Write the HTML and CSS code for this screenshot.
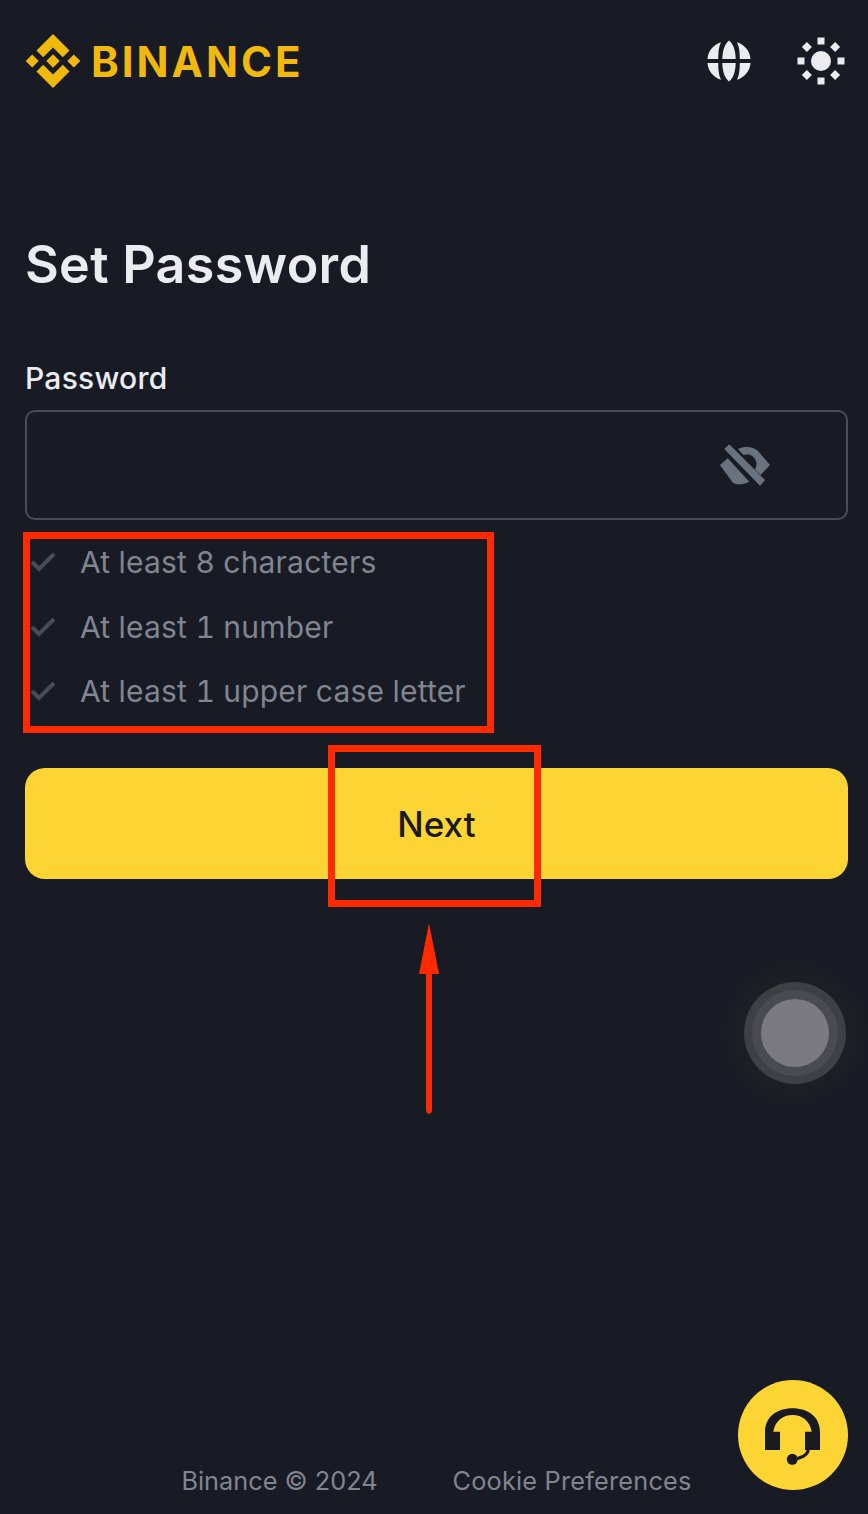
FILE: index.html
```html
<!DOCTYPE html>
<html lang="en">
<head>
<meta charset="UTF-8">
<meta name="viewport" content="width=device-width, initial-scale=1.0">
<title>Set Password</title>
<link rel="stylesheet" href="styles.css">
</head>
<body>

<div class="page">
    <header class="topbar">
        <div class="logo">
            <svg class="logo-mark" viewBox="0 0 56 56" width="56" height="56">
                <path fill="#f0b90b" d="M28 1 L44.500 17.500 L37.800 24.200 L28 14.400 L18.200 24.200 L11.500 17.500 Z"/>
                <path fill="#f0b90b" d="M28 55 L44.500 38.500 L37.800 31.800 L28 41.600 L18.200 31.800 L11.500 38.500 Z"/>
                <path fill="#f0b90b" d="M7.200 21.500 L13.700 28 L7.200 34.500 L0.700 28 Z"/>
                <path fill="#f0b90b" d="M48.800 21.500 L55.300 28 L48.800 34.500 L42.300 28 Z"/>
                <path fill="#f0b90b" d="M28 21.300 L34.700 28 L28 34.700 L21.300 28 Z"/>
            </svg>
            <span class="logo-text">BINANCE</span>
        </div>
        <div class="topbar-icons">
            <svg class="icon-globe" viewBox="0 0 44 44" width="44" height="44">
                <path fill="#eaecef" d="M22 1.500 C17.500 5 15.500 12 15.300 20 L28.700 20 C28.500 12 26.500 5 22 1.500 Z"/>
                <path fill="#eaecef" d="M22 42.500 C17.500 39 15.500 32 15.300 24 L28.700 24 C28.500 32 26.500 39 22 42.500 Z"/>
                <path fill="#eaecef" d="M14 3.200 C11.500 8 11.300 14 11.200 20 L0.500 20 C1 12 6.500 5.500 14 3.200 Z"/>
                <path fill="#eaecef" d="M30 3.200 C32.500 8 32.700 14 32.800 20 L43.500 20 C43 12 37.500 5.500 30 3.200 Z"/>
                <path fill="#eaecef" d="M14 40.800 C11.500 36 11.300 30 11.200 24 L0.500 24 C1 32 6.500 38.500 14 40.800 Z"/>
                <path fill="#eaecef" d="M30 40.800 C32.500 36 32.700 30 32.800 24 L43.500 24 C43 32 37.500 38.500 30 40.800 Z"/>
            </svg>
            <svg class="icon-sun" viewBox="0 0 48 48" width="48" height="48">
                <circle cx="24" cy="24" r="10" fill="#eaecef"/>
                <rect x="20.500" y="0.500" width="7" height="7" fill="#eaecef"/>
                <rect x="20.500" y="40.500" width="7" height="7" fill="#eaecef"/>
                <rect x="0.500" y="20.500" width="7" height="7" fill="#eaecef"/>
                <rect x="40.500" y="20.500" width="7" height="7" fill="#eaecef"/>
                <path fill="#eaecef" d="M9.900 4.900 L14.900 9.900 L9.900 14.900 L4.900 9.900 Z"/>
                <path fill="#eaecef" d="M38.100 4.900 L43.100 9.900 L38.100 14.900 L33.100 9.900 Z"/>
                <path fill="#eaecef" d="M9.900 33.100 L14.900 38.100 L9.900 43.100 L4.900 38.100 Z"/>
                <path fill="#eaecef" d="M38.100 33.100 L43.100 38.100 L38.100 43.100 L33.100 38.100 Z"/>
            </svg>
        </div>
    </header>

    <main class="content">
        <h1 class="title">Set Password</h1>
        <label class="field-label">Password</label>
        <div class="field">
            <svg class="icon-eye" viewBox="0 0 50 44" width="50" height="44">
                <path fill="#6a7280" d="M9.300 1.300 L4.300 6 L40 42.700 L45 37 Z"/>
                <path fill="#6a7280" d="M18 6 C25 3 33 3.500 38 8 L50 22 L40.700 32 L35 26.500 C38 21 36 16 33 13.500 C30 11 27 11 23.500 12 Z"/>
                <path fill="#6a7280" d="M0 22 L7.700 15.300 L29.300 38.700 C22 42 17 42 13 40 Z"/>
            </svg>
        </div>
        <ul class="rules">
            <li class="rule">
                <svg class="check" viewBox="0 0 26 20" width="26" height="20"><path d="M2 10 L9 17 L24 2" fill="none" stroke="#474d57" stroke-width="4"/></svg>
                <span>At least 8 characters</span>
            </li>
            <li class="rule">
                <svg class="check" viewBox="0 0 26 20" width="26" height="20"><path d="M2 10 L9 17 L24 2" fill="none" stroke="#474d57" stroke-width="4"/></svg>
                <span>At least 1 number</span>
            </li>
            <li class="rule">
                <svg class="check" viewBox="0 0 26 20" width="26" height="20"><path d="M2 10 L9 17 L24 2" fill="none" stroke="#474d57" stroke-width="4"/></svg>
                <span>At least 1 upper case letter</span>
            </li>
        </ul>
        <button class="button">Next</button>
    </main>

    <footer class="footer">
        <span>Binance © 2024</span>
        <span class="footer-link">Cookie Preferences</span>
    </footer>
</div>

<!-- annotations drawn over the screenshot -->
<div class="mark mark-rules"></div>
<div class="mark mark-next"></div>
<svg class="arrow" viewBox="0 0 24 194" width="24" height="194">
    <path fill="#ff2a00" d="M12 1 L22 52 L15 52 L15 188 C15 193 9 193 9 188 L9 52 L2 52 Z"/>
</svg>

<div class="touch-button">
    <div class="touch-ring">
        <div class="touch-core"></div>
    </div>
</div>

<div class="support">
    <svg viewBox="0 0 60 60" width="60" height="60">
        <path fill="#181a20" d="M2 45 L2 27 C2 12 14 3.300 29.500 3.300 C45 3.300 57 12 57 27 L57 45 L42 45 L42 26.700 L48.700 26.700 C47 16 39 10 29.500 10 C20 10 12 16 10.300 26.700 L17 26.700 L17 45 Z"/>
        <path fill="none" stroke="#181a20" stroke-width="3" d="M45.500 45 C44 50 38 54 29.500 54"/>
        <circle cx="29.300" cy="54.300" r="5.500" fill="#181a20"/>
    </svg>
</div>

</body>
</html>
```

FILE: styles.css
```css
* {
    box-sizing: border-box;
}

body {
    margin: 0;
    background-color: #191b24;
    color: #eaecef;
    font-family: "Inter", "Noto Sans", sans-serif;
}

.page {
    height: 1514px;
    display: flex;
    flex-direction: column;
    padding: 0 20px 0 25px;
}

.topbar {
    display: flex;
    justify-content: space-between;
    align-items: center;
    height: 122px;
}

.logo {
    display: flex;
    align-items: center;
    gap: 10px;
}

.logo-text {
    color: #f0b90b;
    font-size: 42px;
    font-weight: 700;
    letter-spacing: 3px;
}

.topbar-icons {
    display: flex;
    align-items: center;
    gap: 46px;
    margin-right: 3px;
}

.content {
    flex: 1;
}

.title {
    margin: 111px 0 0;
    font-size: 52px;
    line-height: 64px;
    font-weight: 600;
    letter-spacing: 0.3px;
}

.field-label {
    display: block;
    margin-top: 63px;
    font-size: 30px;
    line-height: 36px;
    font-weight: 500;
    letter-spacing: 0.25px;
}

.field {
    display: flex;
    align-items: center;
    justify-content: flex-end;
    height: 110px;
    margin-top: 14px;
    padding-right: 76px;
    border: 2px solid #474d57;
    border-radius: 10px;
}

.rules {
    list-style: none;
    margin: 10px 0 0;
    padding: 0;
}

.rule {
    display: flex;
    align-items: center;
    gap: 24px;
    height: 64.500px;
    padding-left: 5px;
    color: #808590;
    font-size: 30px;
    font-feature-settings: "tnum";
    letter-spacing: 0.2px;
}

.button {
    display: block;
    width: 100%;
    height: 111px;
    margin-top: 44px;
    padding-top: 3px;
    border: none;
    border-radius: 20px;
    background-color: #fcd535;
    color: #181a20;
    font-family: inherit;
    font-size: 35px;
    font-weight: 500;
}

.footer {
    display: flex;
    justify-content: center;
    gap: 75px;
    height: 49px;
    color: #808590;
    font-size: 25.300px;
}

.footer-link {
    letter-spacing: 0.2px;
}

.mark {
    position: absolute;
    border: 7px solid #ff2a00;
}

.mark-rules {
    left: 23px;
    top: 532px;
    width: 471px;
    height: 201px;
}

.mark-next {
    left: 328px;
    top: 745px;
    width: 213px;
    height: 162px;
}

.arrow {
    position: absolute;
    left: 417px;
    top: 922px;
}

.touch-button {
    position: absolute;
    left: 744px;
    top: 982px;
    width: 102px;
    height: 102px;
    padding: 8px;
    border-radius: 50%;
    background-color: #3f4046;
    box-shadow: 0 0 20px 14px #1f2026;
}

.touch-ring {
    width: 86px;
    height: 86px;
    padding: 9px;
    border-radius: 50%;
    background-color: #4a4b51;
}

.touch-core {
    width: 68px;
    height: 68px;
    border-radius: 50%;
    background-color: #7b7a80;
}

.support {
    position: absolute;
    left: 738px;
    top: 1380px;
    width: 110px;
    height: 110px;
    display: flex;
    align-items: center;
    justify-content: center;
    border-radius: 50%;
    background-color: #fcd535;
}
```
